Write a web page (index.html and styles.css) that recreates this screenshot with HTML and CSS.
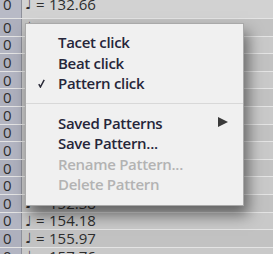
FILE: index.html
```html
<!DOCTYPE html>
<html>
<head>
<meta charset="utf-8">
<link rel="stylesheet" href="styles.css">
</head>
<body>
<div class="list">
  <div class="row first"><span class="idx">0</span><span class="note">♩</span><span class="eq">=</span><span class="val">132.66</span></div>
  <div class="row"><span class="idx">0</span><span class="note">♩</span><span class="eq">=</span><span class="val">134.45</span></div>
  <div class="row"><span class="idx">0</span><span class="note">♩</span><span class="eq">=</span><span class="val">136.25</span></div>
  <div class="row"><span class="idx">0</span><span class="note">♩</span><span class="eq">=</span><span class="val">138.04</span></div>
  <div class="row"><span class="idx">0</span><span class="note">♩</span><span class="eq">=</span><span class="val">139.83</span></div>
  <div class="row"><span class="idx">0</span><span class="note">♩</span><span class="eq">=</span><span class="val">141.62</span></div>
  <div class="row"><span class="idx">0</span><span class="note">♩</span><span class="eq">=</span><span class="val">143.42</span></div>
  <div class="row"><span class="idx">0</span><span class="note">♩</span><span class="eq">=</span><span class="val">145.21</span></div>
  <div class="row"><span class="idx">0</span><span class="note">♩</span><span class="eq">=</span><span class="val">147.00</span></div>
  <div class="row"><span class="idx">0</span><span class="note">♩</span><span class="eq">=</span><span class="val">148.80</span></div>
  <div class="row"><span class="idx">0</span><span class="note">♩</span><span class="eq">=</span><span class="val">150.59</span></div>
  <div class="row"><span class="idx">0</span><span class="note">♩</span><span class="eq">=</span><span class="val">152.38</span></div>
  <div class="row"><span class="idx">0</span><span class="note">♩</span><span class="eq">=</span><span class="val">154.18</span></div>
  <div class="row"><span class="idx">0</span><span class="note">♩</span><span class="eq">=</span><span class="val">155.97</span></div>
  <div class="row"><span class="idx">0</span><span class="note">♩</span><span class="eq">=</span><span class="val">157.76</span></div>
</div>

<div class="menu">
  <div class="item">Tacet click</div>
  <div class="item">Beat click</div>
  <div class="item checked"><svg class="check" width="7" height="9" viewBox="0 0 7 9"><path d="M0.8 5.2 L2.4 8 L6.2 0.8" fill="none" stroke="#2a2a38" stroke-width="1.5"/></svg>Pattern click</div>
  <div class="sep"></div>
  <div class="item sub">Saved Patterns<span class="arrow"></span></div>
  <div class="item">Save Pattern...</div>
  <div class="item disabled">Rename Pattern...</div>
  <div class="item disabled">Delete Pattern</div>
</div>
</body>
</html>
```

FILE: styles.css
```css
html, body {
  margin: 0;
  padding: 0;
  width: 273px;
  height: 254px;
  overflow: hidden;
  background: #c8c8c8;
}

body {
  position: relative;
  font-family: "Open Sans", "DejaVu Sans", sans-serif;
}

.list {
  margin-top: -5px;
}

.row {
  display: flex;
  align-items: center;
  height: 17.6px;
  box-sizing: border-box;
  border-bottom: 1px solid #e4e4e4;
  background: linear-gradient(to right, #b3b5c2 0, #b3b5c2 21px, #8e909a 21px, #8e909a 22px, #c9c9c9 22px);
  font-size: 15px;
  color: #2e2e2e;
  line-height: 1;
}

.row:nth-child(even) {
  background: linear-gradient(to right, #aeb0bd 0, #aeb0bd 21px, #8e909a 21px, #8e909a 22px, #c2c2c2 22px);
}

.row.first {
  height: 24px;
  padding-bottom: 5px;
  background: linear-gradient(to right, #b8bac6 0, #b8bac6 21px, #8e909a 21px, #8e909a 22px, #d2d2d2 22px);
}

.idx {
  width: 25px;
  padding-left: 3px;
  box-sizing: border-box;
}

.note {
  font-family: "DejaVu Sans", sans-serif;
  font-size: 14px;
  width: 11px;
}

.eq {
  width: 13px;
}

.menu {
  position: absolute;
  left: 25px;
  top: 23px;
  width: 219px;
  box-sizing: border-box;
  background: #f0f0f0;
  border: 1px solid #a9a9a9;
  padding: 8px 0 10px 0;
  box-shadow: 4px 9px 14px rgba(0, 0, 0, 0.5);
}

.item {
  position: relative;
  display: flex;
  align-items: center;
  justify-content: space-between;
  height: 20.5px;
  padding-left: 32px;
  padding-right: 15px;
  font-size: 15px;
  font-weight: 600;
  letter-spacing: -0.3px;
  color: #26263a;
  line-height: 20.5px;
  white-space: nowrap;
}

.item.disabled {
  color: #b3b3b3;
}

.check {
  position: absolute;
  left: 12px;
  top: 6px;
}

.sep {
  height: 1px;
  background: #d8d8d8;
  margin: 9px 0 9px 0;
}

.arrow {
  width: 0;
  height: 0;
  border-top: 5.5px solid transparent;
  border-bottom: 5.5px solid transparent;
  border-left: 10px solid #3a3a3a;
  margin-top: -2px;
}
```
